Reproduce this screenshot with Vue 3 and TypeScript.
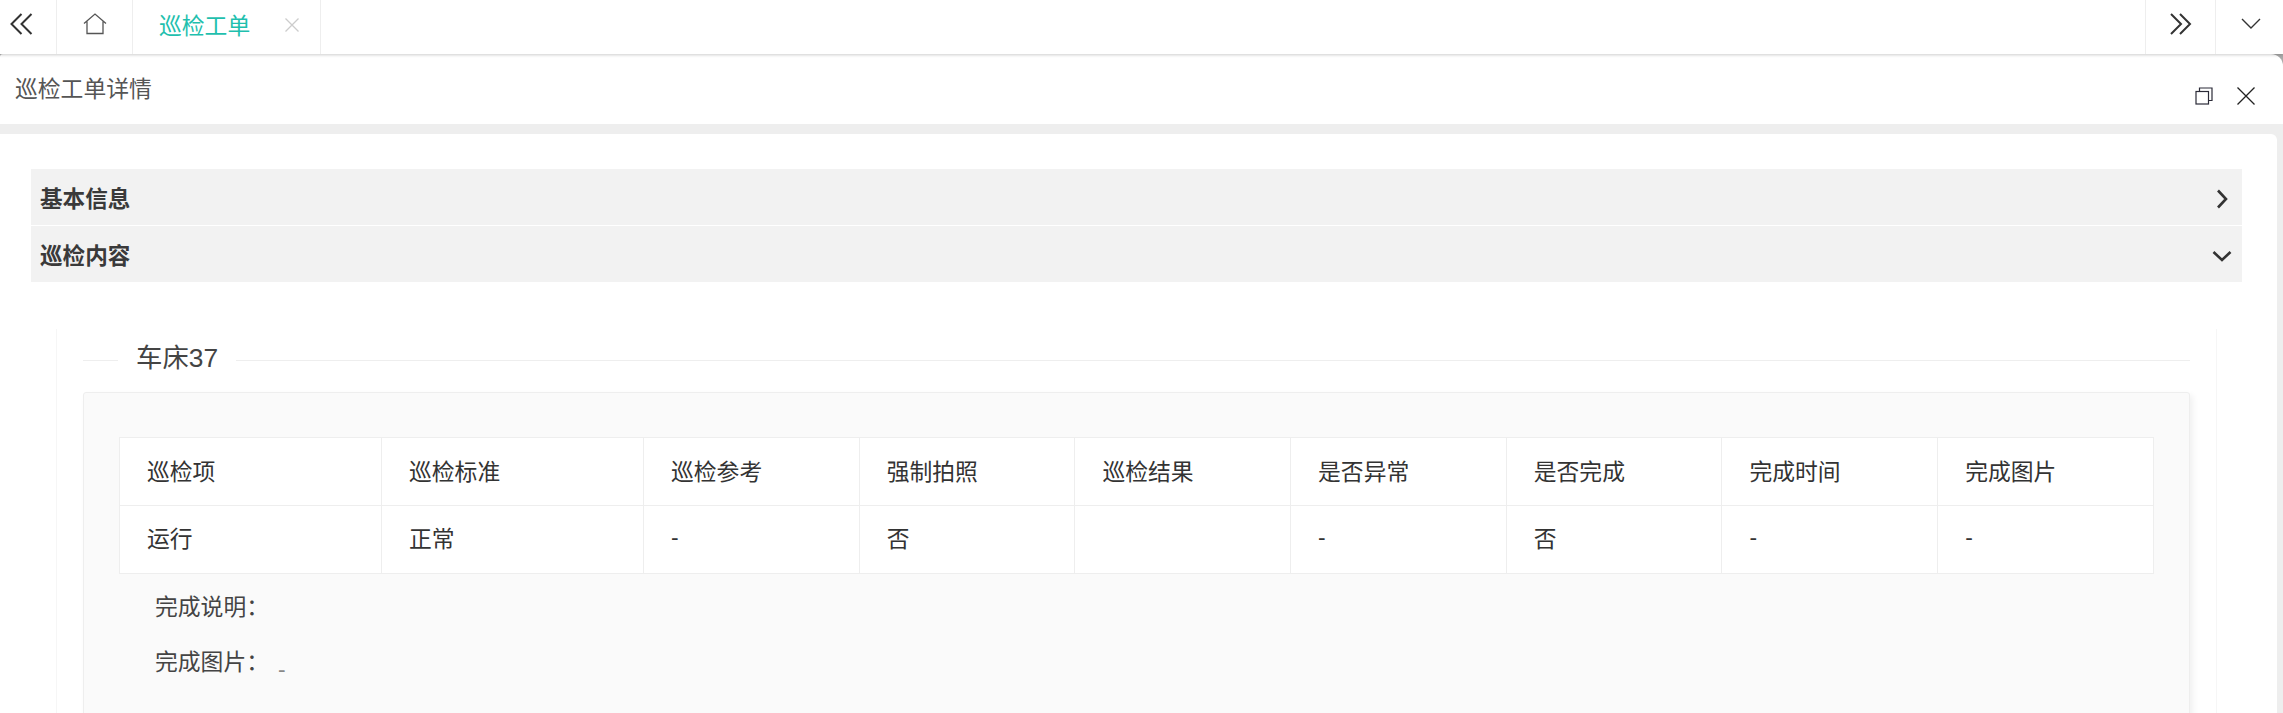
<script setup lang="ts">
const columns = ['巡检项', '巡检标准', '巡检参考', '强制拍照', '巡检结果', '是否异常', '是否完成', '完成时间', '完成图片']
const row = ['运行', '正常', '-', '否', '', '-', '否', '-', '-']
</script>

<template>
  <div class="page">
    <div class="tabbar">
      <div class="tab-btn first">
        <svg width="24" height="22" viewBox="0 0 24 22" fill="none" stroke="#333" stroke-width="2">
          <path d="M11.5 1 1.5 11l10 10M21.5 1l-10 10 10 10" />
        </svg>
      </div>
      <div class="tab-btn home">
        <svg width="24" height="22" viewBox="0 0 24 22" fill="none" stroke="#555" stroke-width="1.3">
          <path d="M1 10.5 12 1l11 9.5M4 8.500V20.500h16V8.500" />
        </svg>
      </div>
      <div class="tab active">
        <span>巡检工单</span>
        <svg class="tab-close" width="14" height="14" viewBox="0 0 14 14" stroke="#ccc" stroke-width="1.3">
          <path d="M.5.5l13 13M13.5.5l-13 13" />
        </svg>
      </div>
      <div class="tab-space"></div>
      <div class="tab-btn next">
        <svg width="22" height="22" viewBox="0 0 22 22" fill="none" stroke="#333" stroke-width="2">
          <path d="M1 1l10 10L1 21M10 1l10 10-10 10" />
        </svg>
      </div>
      <div class="tab-btn more">
        <svg width="20" height="12" viewBox="0 0 20 12" fill="none" stroke="#333" stroke-width="1.4">
          <path d="M1 1l9 9 9-9" />
        </svg>
      </div>
    </div>

    <div class="dialog">
      <div class="dialog-head">
        <span class="dialog-title">巡检工单详情</span>
        <div class="dialog-tools">
          <svg width="18" height="18" viewBox="0 0 18 18" fill="none" stroke="#2b2b38" stroke-width="1.2">
            <path d="M4.5 4V1H17v12.500h-3.500" />
            <rect x="1" y="4.500" width="12.500" height="12.500" />
          </svg>
          <svg width="18" height="18" viewBox="0 0 18 18" fill="none" stroke="#222" stroke-width="1.3">
            <path d="M.5.5l17 17M17.500.5l-17 17" />
          </svg>
        </div>
      </div>

      <div class="dialog-body">
        <div class="section-head">
          <span>基本信息</span>
          <svg class="chev-right" width="12" height="20" viewBox="0 0 12 20" fill="none" stroke="#333" stroke-width="2.6">
            <path d="M2 1.500 10 10l-8 8.500" />
          </svg>
        </div>
        <div class="section-head">
          <span>巡检内容</span>
          <svg class="chev-down" width="20" height="12" viewBox="0 0 20 12" fill="none" stroke="#333" stroke-width="2.6">
            <path d="M1.500 2 10 10l8.500-8" />
          </svg>
        </div>

        <div class="device">
          <div class="legend">
            <span class="legend-line short"></span>
            <span class="legend-text">车床37</span>
            <span class="legend-line"></span>
          </div>
          <div class="card">
            <table class="items">
              <colgroup>
                <col class="col-wide" />
                <col class="col-wide" />
                <col v-for="n in 7" :key="n" class="col-norm" />
              </colgroup>
              <thead>
                <tr>
                  <th v-for="c in columns" :key="c">{{ c }}</th>
                </tr>
              </thead>
              <tbody>
                <tr>
                  <td v-for="(v, i) in row" :key="i">{{ v }}</td>
                </tr>
              </tbody>
            </table>
            <div class="note">完成说明：</div>
            <div class="note">完成图片：<span class="dash">-</span></div>
          </div>
        </div>
      </div>
    </div>
  </div>
</template>

<style scoped>
.page {
  height: 713px;
  overflow: hidden;
  background: #fff;
  font-family: "Liberation Sans", "Noto Sans CJK SC", sans-serif;
  font-size: 22.8px;
  color: #333;
  display: flex;
  flex-direction: column;
}

.tabbar {
  height: 54px;
  flex: none;
  display: flex;
  align-items: stretch;
  background: #fff;
  box-shadow: 0 1px 3px rgba(0, 0, 0, 0.2);
  position: relative;
  z-index: 2;
}

.tab-btn {
  display: flex;
  align-items: center;
  justify-content: center;
  border-right: 1px solid #eee;
  box-sizing: border-box;
  padding-bottom: 7px;
}

.first {
  width: 57px;
  padding-right: 13px;
}

.home {
  width: 76px;
}

.tab {
  width: 188px;
  box-sizing: border-box;
  display: flex;
  align-items: center;
  padding-left: 26px;
  padding-bottom: 6px;
  border-right: 1px solid #eee;
}

.tab.active {
  color: #1fbfae;
}

.tab-close {
  margin-left: 35px;
  margin-top: 1px;
}

.tab-space {
  flex: 1;
  border-right: 1px solid #eee;
}

.next {
  width: 70px;
}

.more {
  width: 67px;
  border-right: none;
  padding-left: 3px;
}

.dialog {
  flex: 1;
  min-height: 0;
  display: flex;
  flex-direction: column;
  background: linear-gradient(#aaa 0 20px, #eee 20px);
}

.dialog-head {
  height: 70px;
  flex: none;
  box-sizing: border-box;
  background: #fff;
  border-radius: 3px 12px 0 0;
  display: flex;
  align-items: center;
  justify-content: space-between;
  padding: 0 28px 0 15px;
}

.dialog-title {
  color: #555;
  margin-bottom: 4px;
}

.dialog-tools {
  display: flex;
  align-items: center;
  gap: 24px;
  margin-top: 14px;
}

.dialog-body {
  flex: 1;
  min-height: 0;
  margin-top: 10px;
  margin-right: 6px;
  background: #fff;
  border-top-right-radius: 6px;
  padding: 35px 35px 0 31px;
}

.section-head {
  height: 56px;
  background: #f2f2f2;
  display: flex;
  align-items: center;
  justify-content: space-between;
  padding: 0 9px 0 9px;
  font-size: 22.6px;
  font-weight: 700;
  color: #3a3a3a;
  margin-bottom: 1px;
}

.chev-right {
  margin-right: 5px;
  margin-top: 4px;
}

.chev-down {
  margin-right: 1px;
  margin-top: 4px;
}

.device {
  margin: 47px 25px 0 25px;
  padding: 0 26px;
  height: 400px;
  border-left: 1px solid #f6f6f6;
  border-right: 1px solid #f6f6f6;
}

.legend {
  height: 63px;
  display: flex;
  align-items: center;
  gap: 18px;
}

.legend-line {
  flex: 1;
  height: 1px;
  background: #eee;
}

.legend-line.short {
  flex: none;
  width: 35px;
}

.legend-text {
  font-size: 26.4px;
  color: #444;
  margin-bottom: 10px;
}

.card {
  height: 340px;
  box-sizing: border-box;
  background: #fafafa;
  border: 1px solid #eee;
  border-radius: 3px;
  box-shadow: 3px 3px 6px rgba(0, 0, 0, 0.06);
  padding: 44px 35px 0 35px;
}

.items {
  width: 2034px;
  table-layout: fixed;
  border-collapse: collapse;
  background: #fff;
}

.col-wide {
  width: 262px;
}

.col-norm {
  width: 215.7px;
}

.items th,
.items td {
  height: 64px;
  padding: 0 0 3px 27px;
  border: 1px solid #eee;
  font-weight: 400;
  text-align: left;
  color: #333;
}

.items td {
  height: 62px;
  padding-bottom: 5px;
}

.note {
  height: 55px;
  padding-left: 36px;
  display: flex;
  align-items: center;
  color: #444;
}

.note:first-of-type {
  margin-top: 4px;
}

.dash {
  color: #888;
  margin-left: 9px;
  margin-top: 18px;
}
</style>

<style>
html,
body {
  margin: 0;
  background: #fff;
}
</style>
